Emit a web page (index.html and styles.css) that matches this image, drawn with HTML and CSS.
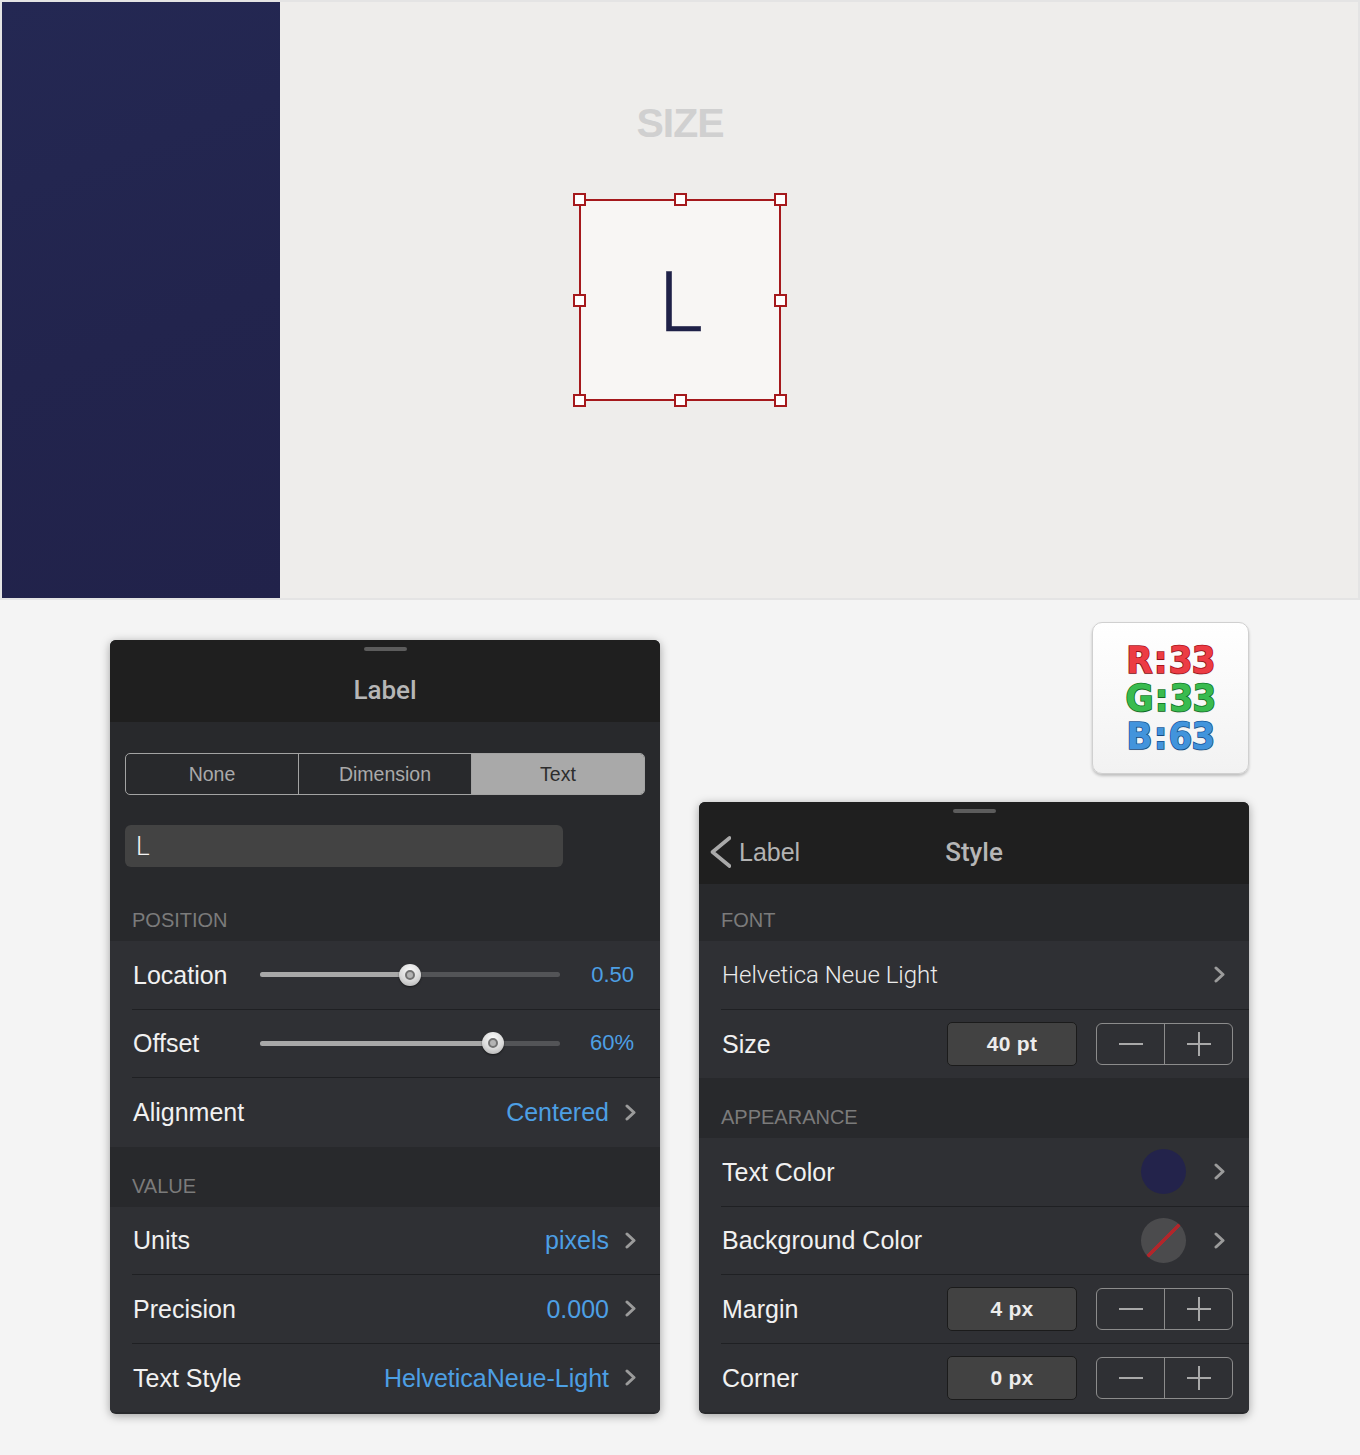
FILE: index.html
```html
<!DOCTYPE html>
<html>
<head>
<meta charset="utf-8">
<title>Label Style</title>
<link rel="stylesheet" href="styles.css">
</head>
<body>
<div class="top">
  <div class="navy"></div>
  <div class="canvas">
    <div class="canvas-title">SIZE</div>
    <div class="sel">
      <span class="sel-text">L</span>
      <i class="h h-tl"></i><i class="h h-tm"></i><i class="h h-tr"></i>
      <i class="h h-ml"></i><i class="h h-mr"></i>
      <i class="h h-bl"></i><i class="h h-bm"></i><i class="h h-br"></i>
    </div>
  </div>
</div>

<div class="bottom">
  <div class="col-left">
    <div class="panel">
      <div class="panel-head">
        <div class="grabber"></div>
        <div class="title">Label</div>
      </div>
      <div class="panel-top">
        <div class="seg">
          <div class="seg-item">None</div>
          <div class="seg-item">Dimension</div>
          <div class="seg-item seg-on">Text</div>
        </div>
        <div class="field">L</div>
      </div>
      <div class="sec">POSITION</div>
      <div class="list">
        <div class="row">
          <span class="lbl lbl-fixed">Location</span>
          <div class="slider"><div class="fill" style="width:50%"></div><div class="knob" style="left:50%"></div></div>
          <span class="val val-sm">0.50</span>
        </div>
        <div class="row">
          <span class="lbl lbl-fixed">Offset</span>
          <div class="slider"><div class="fill" style="width:77.8%"></div><div class="knob" style="left:77.8%"></div></div>
          <span class="val val-sm">60%</span>
        </div>
        <div class="row">
          <span class="lbl">Alignment</span>
          <span class="val">Centered</span>
          <svg class="chev" viewBox="0 0 11 17"><polyline points="2,2 9,8.5 2,15"/></svg>
        </div>
      </div>
      <div class="sec">VALUE</div>
      <div class="list">
        <div class="row">
          <span class="lbl">Units</span>
          <span class="val">pixels</span>
          <svg class="chev" viewBox="0 0 11 17"><polyline points="2,2 9,8.5 2,15"/></svg>
        </div>
        <div class="row">
          <span class="lbl">Precision</span>
          <span class="val">0.000</span>
          <svg class="chev" viewBox="0 0 11 17"><polyline points="2,2 9,8.5 2,15"/></svg>
        </div>
        <div class="row">
          <span class="lbl">Text Style</span>
          <span class="val">HelveticaNeue-Light</span>
          <svg class="chev" viewBox="0 0 11 17"><polyline points="2,2 9,8.5 2,15"/></svg>
        </div>
      </div>
    </div>
  </div>

  <div class="col-right">
    <div class="badge">
      <div class="rgb rgb-r">R<span class="colon">:</span>33</div>
      <div class="rgb rgb-g">G<span class="colon">:</span>33</div>
      <div class="rgb rgb-b">B<span class="colon">:</span>63</div>
    </div>
    <div class="panel panel-right">
      <div class="panel-head">
        <div class="grabber"></div>
        <div class="nav">
          <div class="back">
            <svg class="back-chev" viewBox="0 0 21 32"><polyline points="19.5,2 2.5,16 19.5,30"/></svg>
            <span class="back-lbl">Label</span>
          </div>
          <div class="title title-nav">Style</div>
          <div></div>
        </div>
      </div>
      <div class="sec sec-font">FONT</div>
      <div class="list">
        <div class="row">
          <span class="lbl lbl-light">Helvetica Neue Light</span>
          <svg class="chev chev-auto" viewBox="0 0 11 17"><polyline points="2,2 9,8.5 2,15"/></svg>
        </div>
        <div class="row row-step">
          <span class="lbl">Size</span>
          <div class="vbox">40 pt</div>
          <div class="stepper">
            <div class="step"><svg viewBox="0 0 24 24"><line x1="0" y1="12" x2="24" y2="12"/></svg></div>
            <div class="step"><svg viewBox="0 0 24 24"><line x1="0" y1="12" x2="24" y2="12"/><line x1="12" y1="0" x2="12" y2="24"/></svg></div>
          </div>
        </div>
      </div>
      <div class="sec">APPEARANCE</div>
      <div class="list">
        <div class="row">
          <span class="lbl">Text Color</span>
          <div class="sw sw-text"></div>
          <svg class="chev chev-sw" viewBox="0 0 11 17"><polyline points="2,2 9,8.5 2,15"/></svg>
        </div>
        <div class="row">
          <span class="lbl">Background Color</span>
          <div class="sw sw-none"></div>
          <svg class="chev chev-sw" viewBox="0 0 11 17"><polyline points="2,2 9,8.5 2,15"/></svg>
        </div>
        <div class="row row-step">
          <span class="lbl">Margin</span>
          <div class="vbox">4 px</div>
          <div class="stepper">
            <div class="step"><svg viewBox="0 0 24 24"><line x1="0" y1="12" x2="24" y2="12"/></svg></div>
            <div class="step"><svg viewBox="0 0 24 24"><line x1="0" y1="12" x2="24" y2="12"/><line x1="12" y1="0" x2="12" y2="24"/></svg></div>
          </div>
        </div>
        <div class="row row-step">
          <span class="lbl">Corner</span>
          <div class="vbox">0 px</div>
          <div class="stepper">
            <div class="step"><svg viewBox="0 0 24 24"><line x1="0" y1="12" x2="24" y2="12"/></svg></div>
            <div class="step"><svg viewBox="0 0 24 24"><line x1="0" y1="12" x2="24" y2="12"/><line x1="12" y1="0" x2="12" y2="24"/></svg></div>
          </div>
        </div>
      </div>
    </div>
  </div>
</div>
</body>
</html>
```
FILE: styles.css
```css
* { box-sizing: border-box; margin: 0; padding: 0; }

body {
  width: 1360px;
  height: 1455px;
  overflow: hidden;
  background: #f4f4f4;
  font-family: "Liberation Sans", Arial, sans-serif;
}

/* ---------- top canvas ---------- */
.top {
  height: 600px;
  display: flex;
  border: 2px solid #e4e4e4;
}

.navy {
  width: 278px;
  background: linear-gradient(160deg, #242853 0%, #22244d 55%, #21224a 100%);
}

.canvas {
  flex: 1;
  background: #eeedeb;
  display: flex;
  flex-direction: column;
  align-items: center;
  padding-top: 101px;
  padding-right: 278px;
}

.canvas-title {
  font-size: 41px;
  line-height: 40px;
  font-weight: bold;
  color: #d0d0d0;
  letter-spacing: -1px;
}

.sel {
  margin-top: 56px;
  width: 202px;
  height: 202px;
  border: 2px solid #a5191c;
  background: #f8f6f4;
  position: relative;
  display: flex;
  align-items: center;
  justify-content: center;
}

.sel-text {
  font-family: Roboto, Lato, sans-serif;
  font-weight: 300;
  font-size: 83px;
  line-height: 1;
  color: #1f2147;
  padding-top: 5px;
  padding-left: 2px;
  -webkit-text-stroke: 0.6px #1f2147;
}

.h {
  position: absolute;
  width: 13px;
  height: 13px;
  background: #ffffff;
  border: 2px solid #a5191c;
}
.h-tl { left: -8px; top: -8px; }
.h-tm { left: calc(50% - 6.5px); top: -8px; }
.h-tr { right: -8px; top: -8px; }
.h-ml { left: -8px; top: calc(50% - 6.5px); }
.h-mr { right: -8px; top: calc(50% - 6.5px); }
.h-bl { left: -8px; bottom: -8px; }
.h-bm { left: calc(50% - 6.5px); bottom: -8px; }
.h-br { right: -8px; bottom: -8px; }

/* ---------- bottom ---------- */
.bottom {
  display: flex;
  gap: 40px;
  padding: 0 110px;
}

.col-left {
  width: 550px;
  padding-top: 40px;
}

.col-right {
  width: 550px;
  padding-top: 22px;
  display: flex;
  flex-direction: column;
  align-items: flex-end;
}

/* badge */
.badge {
  width: 157px;
  height: 152px;
  margin-right: 1px;
  border-radius: 10px;
  background: linear-gradient(#ffffff, #f2f2f2);
  border: 1px solid #d0d0d0;
  box-shadow: 0 2px 3px rgba(0,0,0,0.22);
  display: flex;
  flex-direction: column;
  align-items: center;
  justify-content: center;
}

.rgb {
  height: 38px;
  font-family: "DejaVu Sans Condensed", "DejaVu Sans", sans-serif;
  font-stretch: condensed;
  font-weight: bold;
  font-size: 38px;
  line-height: 38px;
  letter-spacing: -0.8px;
  -webkit-text-stroke: 1.6px;
  paint-order: stroke fill;
  text-shadow: 0 1px 1px rgba(0,0,0,0.2);
}
.colon { margin: 0 2px; }
.rgb-r { color: #ec3c44; -webkit-text-stroke-color: #a8161d; }
.rgb-g { color: #39bb4f; -webkit-text-stroke-color: #177c2a; }
.rgb-b { color: #4294dc; -webkit-text-stroke-color: #1b5c9e; }

/* panels */
.panel {
  width: 550px;
  background: #28292c;
  border-radius: 6px;
  box-shadow: 0 2px 10px rgba(0,0,0,0.35);
  overflow: hidden;
  padding-bottom: 2px;
}

.panel-right { margin-top: 28px; margin-right: 1px; }

.panel-head {
  height: 82px;
  background: #1f1f1f;
  display: flex;
  flex-direction: column;
  align-items: center;
  padding-top: 7px;
}

.grabber {
  width: 43px;
  height: 4px;
  border-radius: 2px;
  background: #5c5c5c;
}

.title {
  margin-top: 24px;
  font-family: Roboto, "Liberation Sans", sans-serif;
  font-weight: 500;
  font-size: 26px;
  line-height: 30px;
  color: #b6b6b6;
}

.nav {
  width: 100%;
  margin-top: 24px;
  height: 30px;
  display: grid;
  grid-template-columns: 1fr auto 1fr;
  align-items: center;
}

.title-nav { margin-top: 0; }

.back {
  display: flex;
  align-items: center;
  padding-left: 11px;
  height: 30px;
}

.back-chev {
  width: 21px;
  height: 32px;
  flex-shrink: 0;
}
.back-chev polyline {
  fill: none;
  stroke: #a9a9a9;
  stroke-width: 3.6;
  stroke-linecap: round;
  stroke-linejoin: round;
}

.back-lbl {
  margin-left: 8px;
  font-size: 25px;
  line-height: 30px;
  color: #b3b3b3;
}

.panel-top {
  padding: 31px 15px 14px;
}

.seg {
  display: flex;
  height: 42px;
  border: 1.5px solid #a3a3a3;
  border-radius: 5px;
  overflow: hidden;
}

.seg-item {
  flex: 1;
  display: flex;
  align-items: center;
  justify-content: center;
  font-size: 19.5px;
  color: #aaaaaa;
}
.seg-item + .seg-item { border-left: 1.5px solid #a3a3a3; }

.seg-on {
  background: #a9a9a9;
  color: #2d2d2d;
}

.field {
  margin-top: 30px;
  width: 438px;
  height: 42px;
  border-radius: 6px;
  background: #434343;
  display: flex;
  align-items: center;
  padding-left: 11px;
  font-family: Roboto, Lato, sans-serif;
  font-weight: 300;
  font-size: 26px;
  color: #f4f4f4;
}

.sec {
  height: 60px;
  display: flex;
  align-items: flex-end;
  padding: 0 0 9px 22px;
  font-size: 20px;
  line-height: 24px;
  color: #7b7b7b;
}
.sec-font { height: 57px; }

.list {
  background: #2f3034;
  padding-left: 22px;
}

.row {
  height: 68.5px;
  display: flex;
  align-items: center;
  padding-left: 1px;
  padding-right: 24px;
  border-bottom: 1px solid #1f2023;
}
.row:last-child { border-bottom: none; }
.row-step { padding-right: 16px; }

.lbl {
  font-size: 25px;
  line-height: 30px;
  color: #f1f1f1;
}
.lbl-fixed { width: 127px; flex-shrink: 0; }
.lbl-light {
  font-family: Roboto, Lato, sans-serif;
  font-weight: 300;
  font-size: 24px;
  color: #ebebeb;
}

.val {
  margin-left: auto;
  font-size: 25px;
  line-height: 30px;
  color: #4d9fe4;
}
.val-sm {
  font-size: 22px;
  margin-right: 2px;
}

.chev {
  width: 11px;
  height: 17px;
  margin-left: 16px;
  flex-shrink: 0;
}
.chev polyline {
  fill: none;
  stroke: #9b9b9b;
  stroke-width: 3;
  stroke-linecap: round;
  stroke-linejoin: round;
}
.chev-auto { margin-left: auto; }
.chev-sw { margin-left: 28px; }

/* slider */
.slider {
  position: relative;
  width: 300px;
  height: 5px;
  border-radius: 3px;
  background: #535457;
  flex-shrink: 0;
}
.fill {
  height: 100%;
  border-radius: 3px;
  background: #a8a8a8;
}
.knob {
  position: absolute;
  top: -8.5px;
  width: 22px;
  height: 22px;
  margin-left: -11px;
  border-radius: 50%;
  background: radial-gradient(circle at 50% 30%, #fbfbfb 0%, #d9d9d9 55%, #a8a8a8 100%);
  box-shadow: 0 1px 2px rgba(0,0,0,0.55);
  display: flex;
  align-items: center;
  justify-content: center;
}
.knob::after {
  content: "";
  width: 10px;
  height: 10px;
  border-radius: 50%;
  background: #b4b4b4;
  border: 2px solid #727272;
  box-sizing: border-box;
}

/* value box + stepper */
.vbox {
  margin-left: auto;
  width: 130px;
  height: 44px;
  border: 1px solid #1b1b1b;
  border-radius: 5px;
  background: #424242;
  display: flex;
  align-items: center;
  justify-content: center;
  font-weight: bold;
  font-size: 21px;
  letter-spacing: 0.3px;
  color: #ececec;
}

.stepper {
  margin-left: 19px;
  width: 137px;
  height: 42px;
  border: 1.5px solid #8c8c8c;
  border-radius: 6px;
  display: flex;
}
.step {
  flex: 1;
  display: flex;
  align-items: center;
  justify-content: center;
}
.step + .step { border-left: 1.5px solid #8c8c8c; }
.step svg {
  width: 24px;
  height: 24px;
}
.step line {
  stroke: #a9a9a9;
  stroke-width: 2;
}

/* swatches */
.sw {
  margin-left: auto;
  width: 45px;
  height: 45px;
  border-radius: 50%;
  flex-shrink: 0;
}
.sw-text { background: #23234b; }
.sw-none {
  background: linear-gradient(135deg,
    #4b4b4d calc(50% - 1.6px),
    #b1262b calc(50% - 1.6px),
    #b1262b calc(50% + 1.6px),
    #4b4b4d calc(50% + 1.6px));
}
```
